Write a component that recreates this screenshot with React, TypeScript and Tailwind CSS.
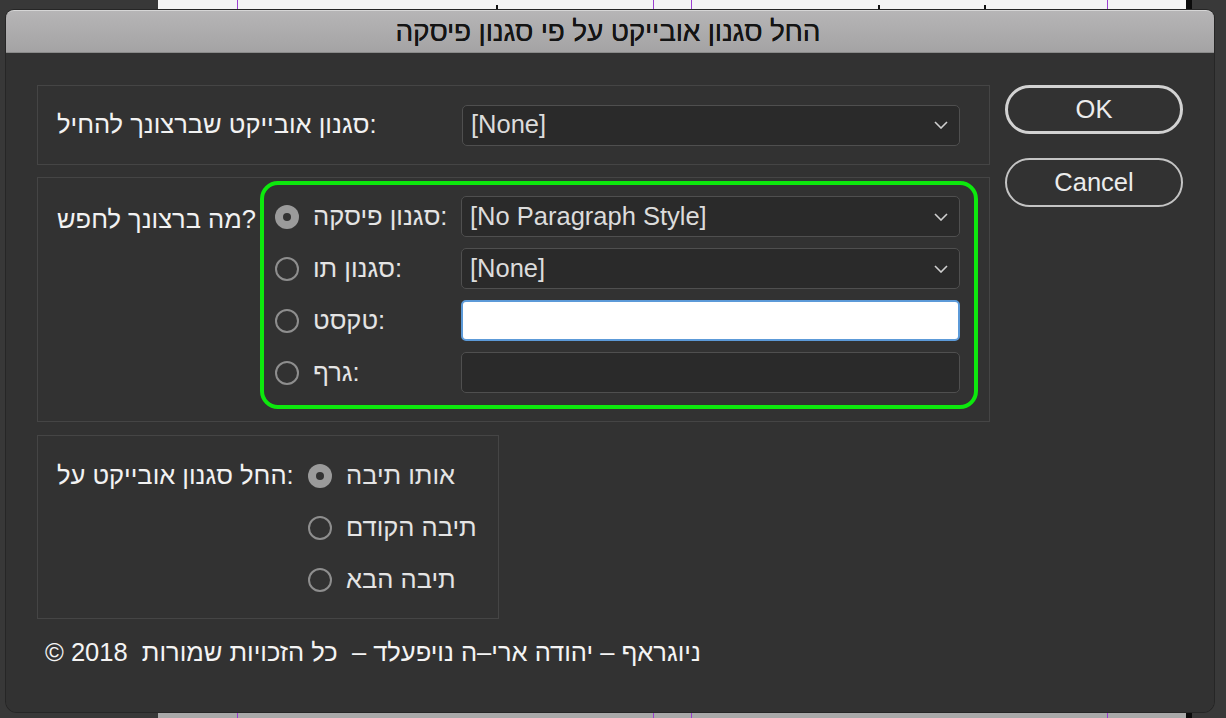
import React from 'react';

const FONT = "font-['Liberation_Sans','DejaVu_Sans',sans-serif]";

function Chevron() {
  return (
    <svg width="14" height="8" viewBox="0 0 14 8" className="shrink-0">
      <polyline points="1,1 7,7 13,1" fill="none" stroke="#cfcfcf" strokeWidth="1.6" />
    </svg>
  );
}

function Radio({ checked }: { checked?: boolean }) {
  if (checked) {
    return (
      <span className="w-6 h-6 rounded-full bg-[#9b9b9b] flex items-center justify-center shrink-0">
        <span className="w-2 h-2 rounded-full bg-[#333333]" />
      </span>
    );
  }
  return <span className="w-6 h-6 rounded-full border-2 border-[#8e8e8e] shrink-0" />;
}

function Select({ value, className = '' }: { value: string; className?: string }) {
  return (
    <div
      className={`h-[41px] bg-[#2a2a2a] border border-[#4f4f4f] rounded-[5px] flex items-center justify-between pl-[8px] pr-[11px] ${className}`}
    >
      <span className="text-[25.5px] leading-none text-[#dcdcdc]">{value}</span>
      <Chevron />
    </div>
  );
}

export default function App() {
  const searchRows = [
    { label: 'סגנון פיסקה:', checked: true, field: 'select', value: '[No Paragraph Style]' },
    { label: 'סגנון תו:', checked: false, field: 'select', value: '[None]' },
    { label: 'טקסט:', checked: false, field: 'active' },
    { label: 'גרף:', checked: false, field: 'empty' },
  ];

  const applyRows = [
    { label: 'אותו תיבה', checked: true },
    { label: 'תיבה הקודם', checked: false },
    { label: 'תיבה הבא', checked: false },
  ];

  return (
    <div className={`relative w-full h-[718px] overflow-hidden bg-[#393939] ${FONT}`}>
      {/* document behind the dialog */}
      <div className="flex h-full">
        <div className="w-[158px] bg-[#383838]" />
        <div className="relative w-[1028px] flex flex-col">
          <div className="h-[360px] bg-[#f4f4f4]" />
          <div className="flex-1 bg-[#a9a9a9]" />
          <span className="absolute top-0 bottom-0 left-[79px] w-px bg-[#9b3fd0]" />
          <span className="absolute top-0 bottom-0 left-[495px] w-px bg-[#9b3fd0]" />
          <span className="absolute top-0 bottom-0 left-[533px] w-px bg-[#9b3fd0]" />
          <span className="absolute top-0 bottom-0 left-[949px] w-px bg-[#9b3fd0]" />
          <span className="absolute top-[5px] h-[6px] left-[338px] w-[2px] bg-[#111]" />
          <span className="absolute top-[5px] h-[6px] left-[720px] w-[2px] bg-[#111]" />
          <span className="absolute top-[5px] h-[6px] left-[826px] w-[2px] bg-[#111]" />
        </div>
        <div className="w-[6px] bg-[#0b0b0b]" />
        <div className="flex-1 bg-[#393939]" />
      </div>

      {/* dialog */}
      <div className="absolute left-[6px] top-[10px] w-[1208px] h-[702px] flex flex-col rounded-t-[8px] rounded-b-[11px] shadow-[0_0_0_1px_#262626]">
        <div className="h-[43px] shrink-0 rounded-t-[8px] bg-gradient-to-b from-[#b6b5b6] to-[#a4a3a4] border-t border-[#d6d6d6] border-b border-b-[#8a8a8a] flex items-center justify-center">
          <span dir="rtl" className="text-[28px] leading-none text-[#141414] tracking-[-0.2px] pr-[4px] [text-shadow:0_0_0.4px_#141414]">
            החל סגנון אובייקט על פי סגנון פיסקה
          </span>
        </div>

        <div className="flex-1 bg-[#323232] rounded-b-[11px] pl-[31px] pt-[32px] flex">
          <div className="w-[953px] flex flex-col">
            {/* object style */}
            <div className="h-[80px] border border-[#454545] flex items-center pl-[19px]">
              <span className="w-[405px] text-[25.5px] leading-none text-[#f2f2f2]">סגנון אובייקט שברצונך להחיל:</span>
              <Select value="[None]" className="w-[498px]" />
            </div>

            {/* what to search */}
            <div className="mt-[12px] h-[245px] border border-[#454545] flex pl-[19px] pt-[3px]">
              <div className="w-[203px] pt-[26px] text-[25.5px] leading-none text-[#f2f2f2]">מה ברצונך לחפש?</div>
              <div className="w-[718px] h-[228px] border-[4px] border-[#0de80d] rounded-[18px] pl-[11px] pr-[14px] pt-[11px] flex flex-col gap-[11px]">
                {searchRows.map((row) => (
                  <div key={row.label} className="h-[41px] flex items-center">
                    <Radio checked={row.checked} />
                    <span className="ml-[14px] w-[148px] text-[25.5px] leading-none text-[#e4e4e4]">{row.label}</span>
                    {row.field === 'select' && <Select value={row.value ?? ''} className="w-[499px]" />}
                    {row.field === 'active' && (
                      <div className="w-[499px] h-[41px] bg-white border-2 border-[#5c9ad8] rounded-[5px]" />
                    )}
                    {row.field === 'empty' && (
                      <div className="w-[499px] h-[41px] bg-[#2a2a2a] border border-[#4f4f4f] rounded-[5px]" />
                    )}
                  </div>
                ))}
              </div>
            </div>

            {/* apply to */}
            <div className="mt-[13px] w-[462px] h-[184px] border border-[#454545] flex pl-[19px] pt-[22px]">
              <div className="w-[251px] h-[36px] flex items-center text-[25.5px] leading-none text-[#f2f2f2]">
                החל סגנון אובייקט על:
              </div>
              <div className="flex flex-col gap-[16px]">
                {applyRows.map((row) => (
                  <div key={row.label} className="h-[36px] flex items-center">
                    <Radio checked={row.checked} />
                    <span className="ml-[14px] text-[25.5px] leading-none text-[#e4e4e4]">{row.label}</span>
                  </div>
                ))}
              </div>
            </div>

            <div className="mt-[21px] ml-[8px] w-fit">
              <p dir="rtl" className="text-[25.5px] leading-none text-[#f4f4f4] whitespace-pre">
                ניוגראף – יהודה ארי–ה נויפעלד –  כל הזכויות שמורות  2018 ©
              </p>
            </div>
          </div>

          {/* buttons */}
          <div className="ml-[15px] w-[178px] flex flex-col gap-[24px]">
            <button className="h-[49px] rounded-full border-[3px] border-[#d2d2d2] text-[25.5px] leading-none text-[#ececec]">
              OK
            </button>
            <button className="h-[49px] rounded-full border-2 border-[#c4c4c4] text-[25.5px] leading-none text-[#ececec]">
              Cancel
            </button>
          </div>
        </div>
      </div>
    </div>
  );
}
